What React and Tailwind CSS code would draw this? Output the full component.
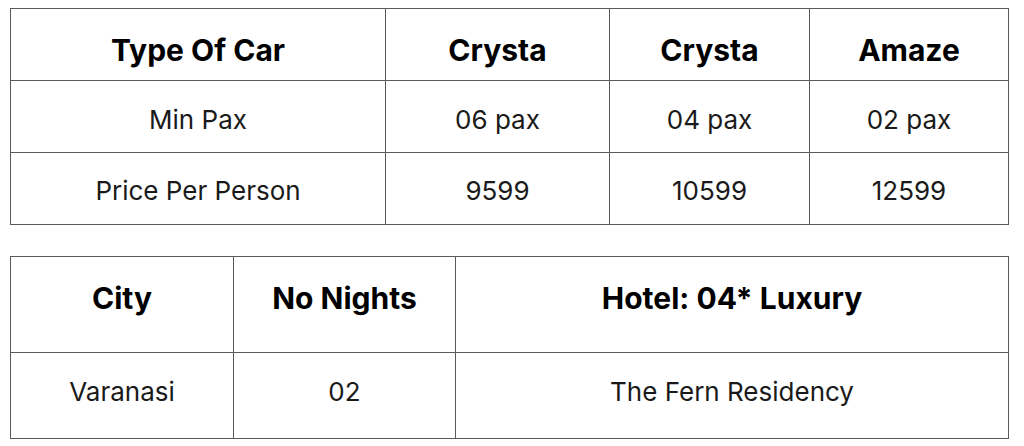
export default function App() {
  const cell = "border border-[#5a5a5a] text-center align-middle px-0";
  return (
    <div className="w-[1024px] h-[446px] bg-white pt-[8px] pl-[10px]" style={{ fontFamily: "Inter, 'Liberation Sans', sans-serif" }}>
      <table className="border-collapse table-fixed w-[998px] text-[#1a1a1a]">
        <colgroup>
          <col className="w-[375px]" />
          <col className="w-[224px]" />
          <col className="w-[200px]" />
          <col className="w-[199px]" />
        </colgroup>
        <tbody>
          <tr className="h-[72px] text-[30px] leading-[36px] font-bold text-black">
            <td className={cell + " pt-[10px] pb-0"}>Type Of Car</td>
            <td className={cell + " pt-[10px] pb-0"}>Crysta</td>
            <td className={cell + " pt-[10px] pb-0"}>Crysta</td>
            <td className={cell + " pt-[10px] pb-0"}>Amaze</td>
          </tr>
          <tr className="h-[72px] text-[26px] leading-[32px]">
            <td className={cell + " pt-[6px] pb-0"}>Min Pax</td>
            <td className={cell + " pt-[6px] pb-0"}>06 pax</td>
            <td className={cell + " pt-[6px] pb-0"}>04 pax</td>
            <td className={cell + " pt-[6px] pb-0"}>02 pax</td>
          </tr>
          <tr className="h-[72px] text-[26px] leading-[32px]">
            <td className={cell + " pt-[5px] pb-0"}>Price Per Person</td>
            <td className={cell + " pt-[5px] pb-0"}>9599</td>
            <td className={cell + " pt-[5px] pb-0"}>10599</td>
            <td className={cell + " pt-[5px] pb-0"}>12599</td>
          </tr>
        </tbody>
      </table>
      <table className="mt-[31px] border-collapse table-fixed w-[998px] text-[#1a1a1a]">
        <colgroup>
          <col className="w-[223px]" />
          <col className="w-[222px]" />
          <col className="w-[553px]" />
        </colgroup>
        <tbody>
          <tr className="h-[96px] text-[30px] leading-[36px] font-bold text-black">
            <td className={cell + " pt-0 pb-[13px]"}>City</td>
            <td className={cell + " pt-0 pb-[13px]"}>No Nights</td>
            <td className={cell + " pt-0 pb-[13px]"}>Hotel: 04* Luxury</td>
          </tr>
          <tr className="h-[86px] text-[26px] leading-[32px]">
            <td className={cell + " pt-0 pb-[7px]"}>Varanasi</td>
            <td className={cell + " pt-0 pb-[7px]"}>02</td>
            <td className={cell + " pt-0 pb-[7px]"}>The Fern Residency</td>
          </tr>
        </tbody>
      </table>
    </div>
  );
}
